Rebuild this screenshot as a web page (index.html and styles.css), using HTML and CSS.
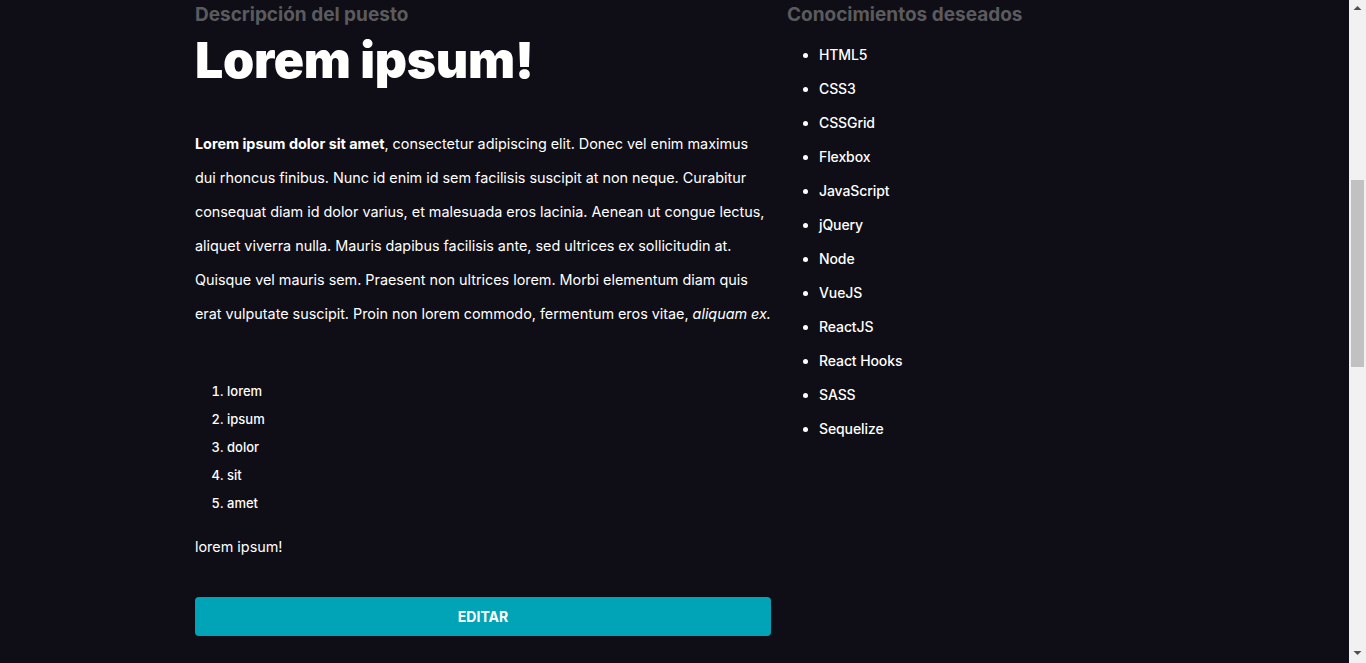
FILE: index.html
```html
<!DOCTYPE html>
<html lang="es">
<head>
<meta charset="utf-8">
<title>Descripción del puesto</title>
<link rel="stylesheet" href="styles.css">
</head>
<body>
<div class="window">
  <main class="viewport">
    <div class="job">
      <section class="job-desc">
        <h3 class="section-title">Descripción del puesto</h3>
        <h1 class="job-title">Lorem ipsum!</h1>
        <p class="job-text"><strong>Lorem ipsum dolor sit amet</strong>, consectetur adipiscing elit. Donec vel enim maximus dui rhoncus finibus. Nunc id enim id sem facilisis suscipit at non neque. Curabitur consequat diam id dolor varius, et malesuada eros lacinia. Aenean ut congue lectus, aliquet viverra nulla. Mauris dapibus facilisis ante, sed ultrices ex sollicitudin at. Quisque vel mauris sem. Praesent non ultrices lorem. Morbi elementum diam quis erat vulputate suscipit. Proin non lorem commodo, fermentum eros vitae, <em>aliquam ex.</em></p>
        <ol class="job-steps">
          <li>lorem</li>
          <li>ipsum</li>
          <li>dolor</li>
          <li>sit</li>
          <li>amet</li>
        </ol>
        <p class="job-note">lorem ipsum!</p>
        <button class="btn-edit" type="button">EDITAR</button>
      </section>
      <aside class="job-skills">
        <h3 class="section-title">Conocimientos deseados</h3>
        <ul class="skills">
          <li>HTML5</li>
          <li>CSS3</li>
          <li>CSSGrid</li>
          <li>Flexbox</li>
          <li>JavaScript</li>
          <li>jQuery</li>
          <li>Node</li>
          <li>VueJS</li>
          <li>ReactJS</li>
          <li>React Hooks</li>
          <li>SASS</li>
          <li>Sequelize</li>
        </ul>
      </aside>
    </div>
  </main>
  <div class="scrollbar" aria-hidden="true">
    <div class="scrollbar-btn">
      <svg width="17" height="17" viewBox="0 0 17 17"><polygon points="4.5,10 8.5,6 12.5,10" fill="#505050"/></svg>
    </div>
    <div class="scrollbar-track">
      <div class="scrollbar-thumb"></div>
    </div>
    <div class="scrollbar-btn">
      <svg width="17" height="17" viewBox="0 0 17 17"><polygon points="4.5,5 12.5,5 8.5,9" fill="#505050"/></svg>
    </div>
  </div>
</div>
</body>
</html>
```

FILE: styles.css
```css
html, body {
  margin: 0;
  height: 100%;
}

body {
  background: #0f0e17;
  color: #fffffe;
  font-family: Inter, "Noto Sans", sans-serif;
  overflow: hidden;
}

.window {
  display: flex;
  height: 100vh;
}

.viewport {
  flex: 1;
  min-width: 0;
  overflow: hidden;
}

/* scrollbar chrome */
.scrollbar {
  width: 17px;
  flex: none;
  display: flex;
  flex-direction: column;
  background: #f1f1f1;
}

.scrollbar-btn {
  height: 17px;
  flex: none;
}

.scrollbar-btn svg {
  display: block;
}

.scrollbar-track {
  flex: 1;
  padding-top: 163px;
}

.scrollbar-thumb {
  height: 187px;
  margin: 0 2px;
  background: #c1c1c1;
}

/* content */
.job {
  width: 959px;
  margin: 0 auto;
  padding-top: 3px;
  display: flex;
  gap: 16px;
}

.job-desc {
  width: 576px;
  flex: none;
}

.job-skills {
  flex: 1;
}

.section-title {
  margin: 0;
  font-size: 19px;
  line-height: 24px;
  font-weight: 700;
  color: #5b5b5e;
}

.job-title {
  margin: 5px 0 0;
  font-size: 50px;
  line-height: 56px;
  font-weight: 900;
  letter-spacing: -0.3px;
}

.job-text {
  margin: 39px 0 0;
  font-size: 14.4px;
  line-height: 34px;
  letter-spacing: -0.02px;
}

.job-steps {
  margin: 46px 0 0;
  padding-left: 32px;
  font-size: 13px;
  line-height: 28px;
  font-weight: 500;
}

.job-note {
  margin: 18px 0 0;
  font-size: 14.4px;
  line-height: 24px;
}

.btn-edit {
  display: block;
  width: 100%;
  height: 39px;
  margin-top: 38px;
  border: 0;
  border-radius: 4px;
  background: #01a4b7;
  color: #fffffe;
  font-family: Inter, "Noto Sans", sans-serif;
  font-size: 14px;
  font-weight: 700;
  cursor: pointer;
}

.skills {
  margin: 11px 0 0;
  padding-left: 32px;
  font-size: 14px;
  line-height: 34px;
  font-weight: 500;
  letter-spacing: -0.1px;
}
```
